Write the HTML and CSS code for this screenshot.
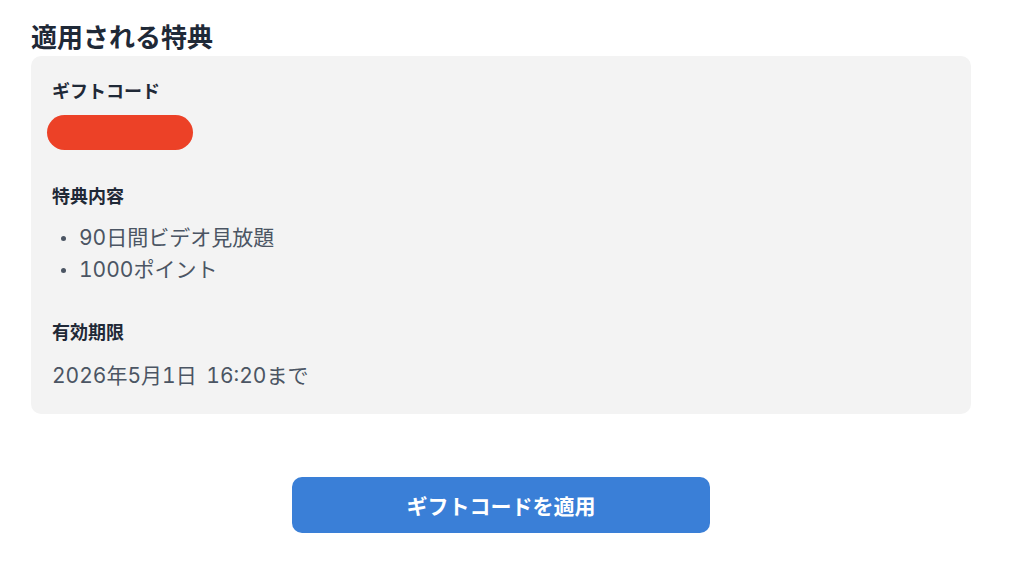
FILE: index.html
```html
<!DOCTYPE html>
<html lang="ja">
<head>
<meta charset="utf-8">
<title>適用される特典</title>
<link rel="stylesheet" href="styles.css">
</head>
<body>
<main class="page">
  <h1 class="title">適用される特典</h1>
  <section class="card">
    <div class="group">
      <h2 class="label">ギフトコード</h2>
      <div class="code-pill"></div>
    </div>
    <div class="group">
      <h2 class="label">特典内容</h2>
      <ul class="perks">
        <li class="perk">90日間ビデオ見放題</li>
        <li class="perk">1000ポイント</li>
      </ul>
    </div>
    <div class="group">
      <h2 class="label">有効期限</h2>
      <p class="value">2026年5月1日 16:20まで</p>
    </div>
  </section>
  <div class="actions">
    <button class="apply-btn" type="button">ギフトコードを適用</button>
  </div>
</main>
</body>
</html>
```
FILE: styles.css
```css
* { box-sizing: border-box; }
html, body {
  margin: 0;
  padding: 0;
  background: #ffffff;
}
body {
  font-family: Inter, "Noto Sans CJK JP", sans-serif;
  font-variant-numeric: tabular-nums;
  color: #1f2937;
}
.page {
  width: 940px;
  margin-left: 31px;
  padding-top: 21px;
}
.title {
  margin: 0 0 1px 0;
  font-size: 26px;
  line-height: 34px;
  font-weight: 700;
  color: #1f2937;
}
.card {
  background: #f3f3f3;
  border-radius: 10px;
  padding: 23px 21px 22px 21px;
  display: flex;
  flex-direction: column;
  gap: 34px;
}
.group {
  display: flex;
  flex-direction: column;
  align-items: flex-start;
}
.label {
  margin: 0;
  font-size: 18px;
  line-height: 26px;
  font-weight: 700;
  color: #1f2937;
}
.code-pill {
  margin-top: 10px;
  margin-left: -5px;
  width: 146px;
  height: 35px;
  border-radius: 18px;
  background: #ec4127;
}
.perks {
  list-style: none;
  margin: 12px 0 0 0;
  padding: 0;
}
.perk {
  position: relative;
  padding-left: 27px;
  font-size: 21px;
  line-height: 32px;
  color: #4b5563;
}
.perk::before {
  content: "";
  position: absolute;
  left: 9px;
  top: 14px;
  width: 5px;
  height: 5px;
  border-radius: 50%;
  background: #4b5563;
}
.value {
  margin: 14px 0 0 0;
  font-size: 21px;
  line-height: 32px;
  color: #4b5563;
  word-spacing: 4px;
}
.actions {
  display: flex;
  justify-content: center;
  margin-top: 63px;
}
.apply-btn {
  width: 418px;
  height: 56px;
  border: none;
  border-radius: 10px;
  background: #3a7fd7;
  color: #ffffff;
  font-family: Inter, "Noto Sans CJK JP", sans-serif;
  font-size: 21px;
  font-weight: 700;
  cursor: pointer;
}
```
